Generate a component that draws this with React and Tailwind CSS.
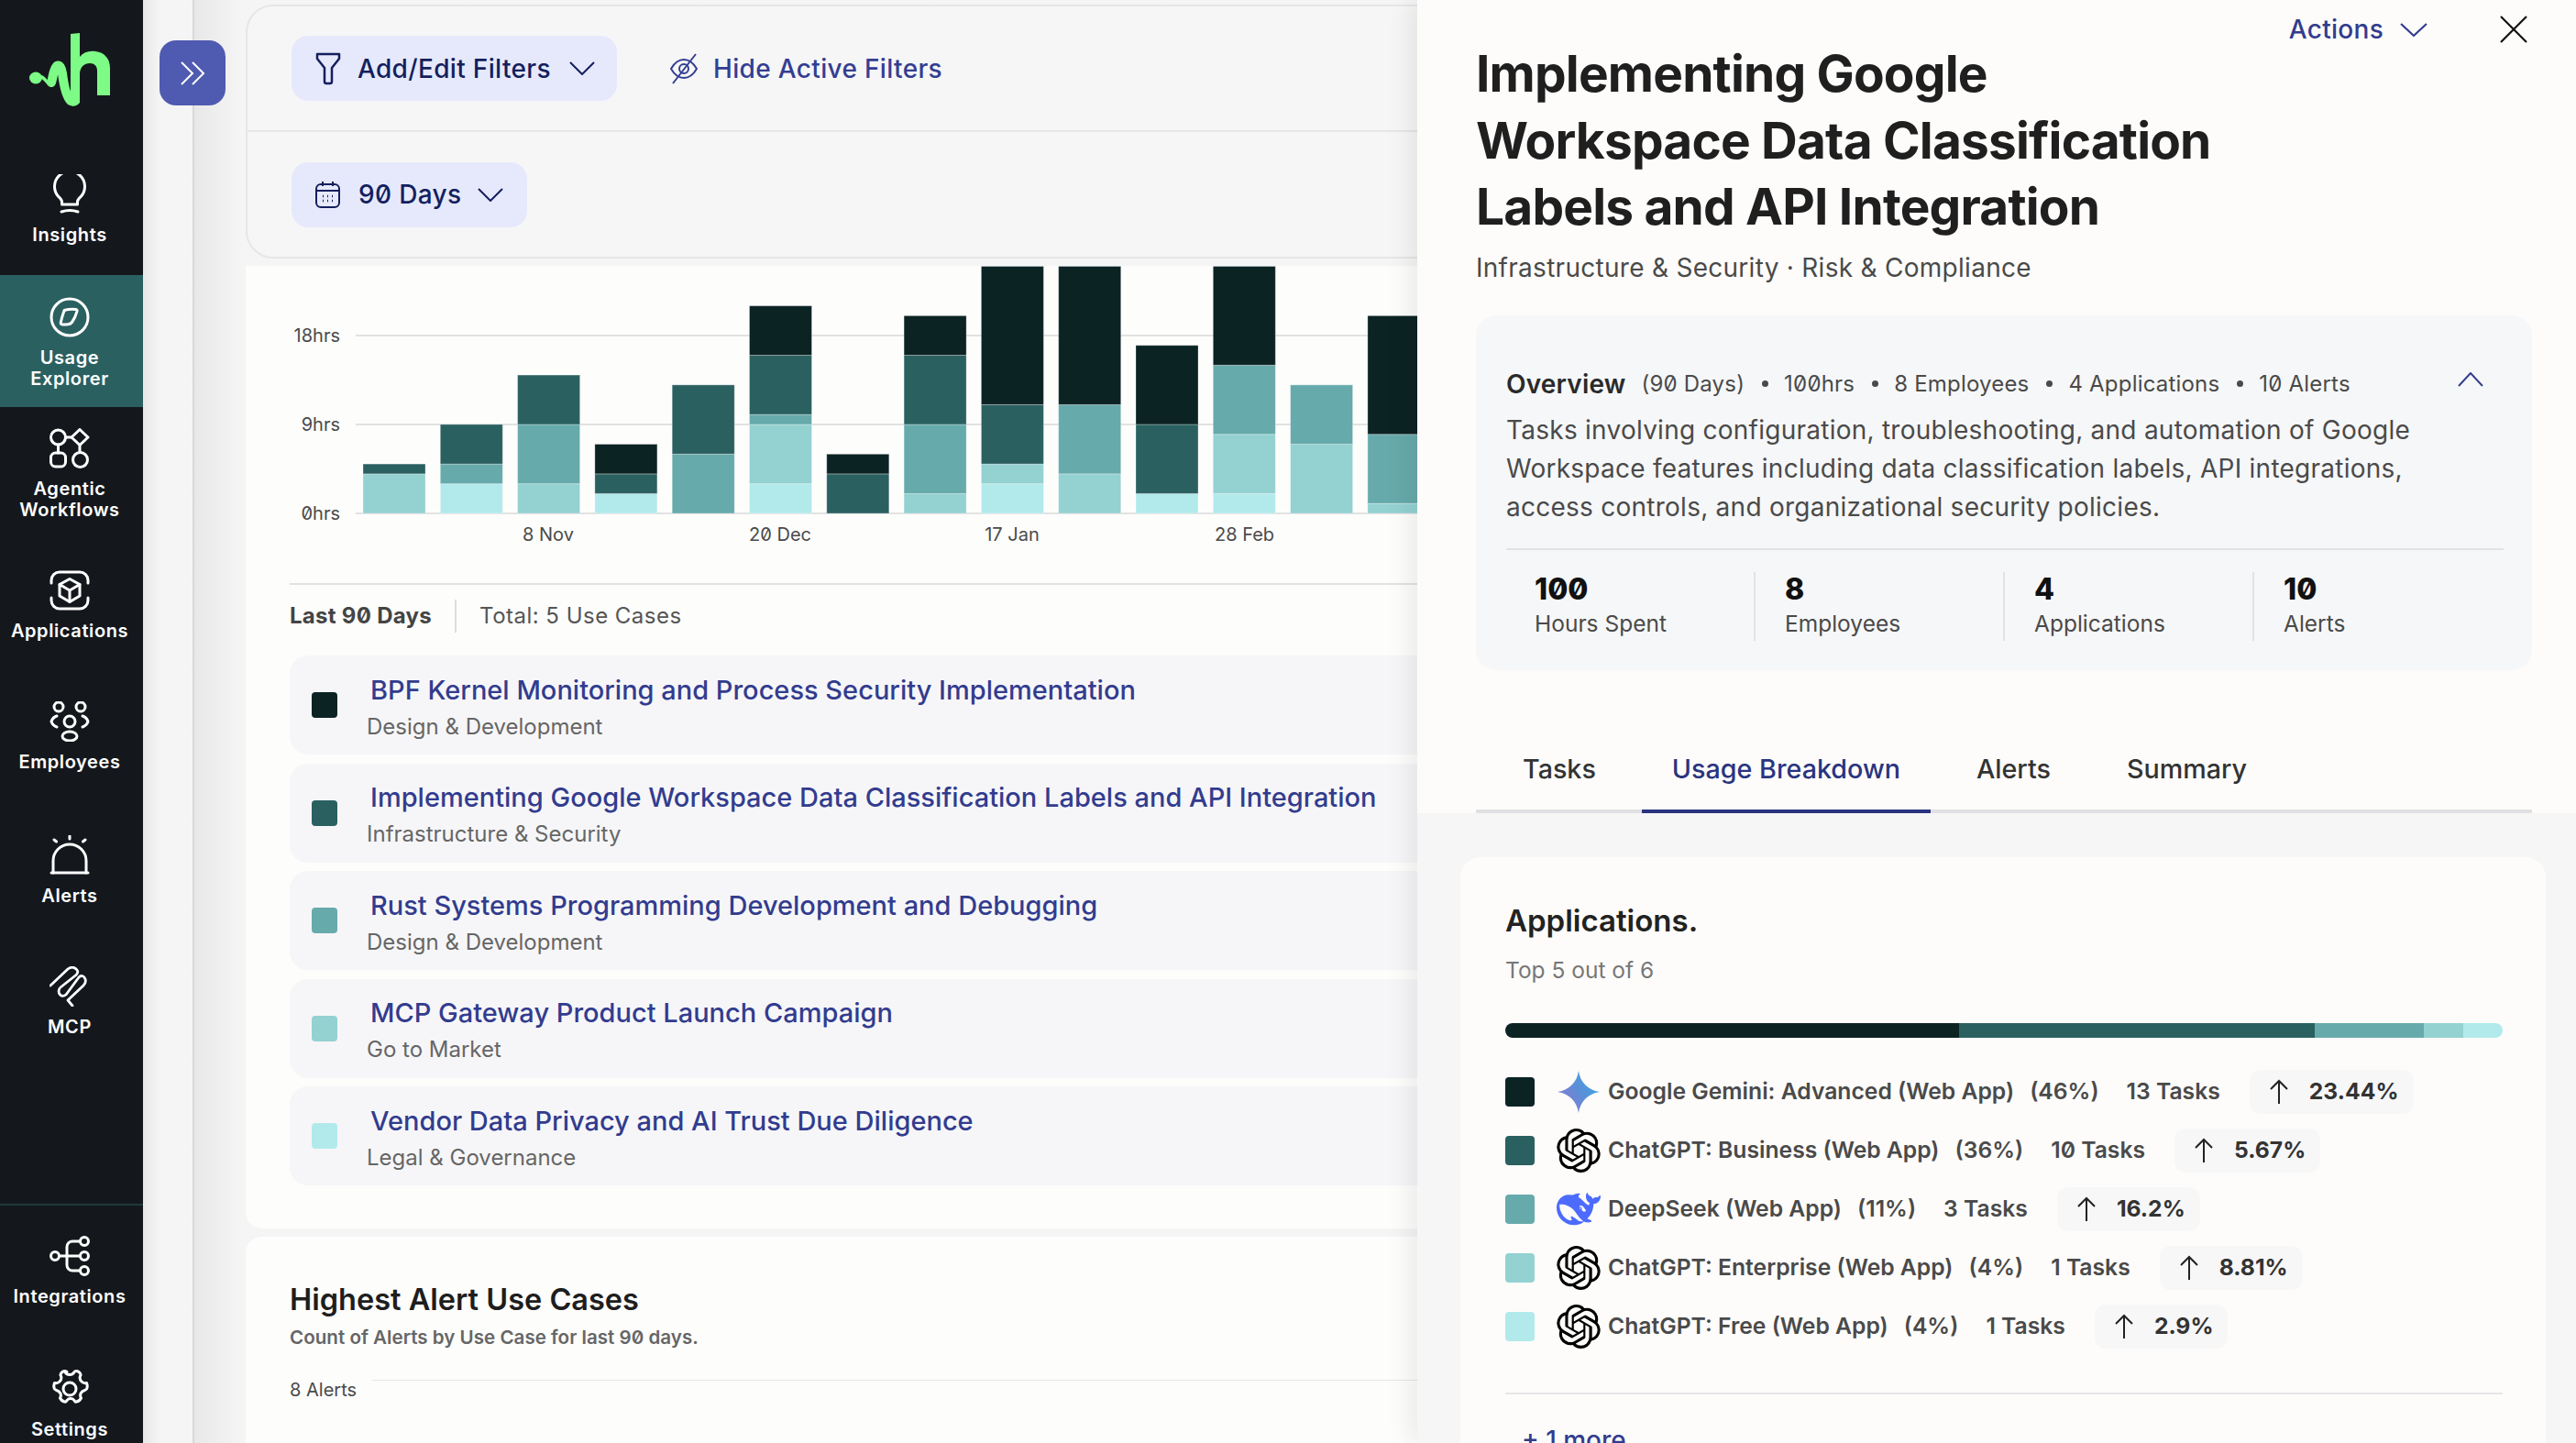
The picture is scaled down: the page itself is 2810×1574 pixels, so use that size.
import { SiOpenai } from 'react-icons/si';

const C = ['#0c2324', '#2b6060', '#67aaab', '#94d1d1', '#b2eaeb'];

// each bar: [colour index, hours] stacked from the bottom
const BARS = [
  [[3, 4], [1, 1]],
  [[4, 3], [2, 2], [1, 4]],
  [[3, 3], [2, 6], [1, 5]],
  [[4, 2], [1, 2], [0, 3]],
  [[2, 6], [1, 7]],
  [[4, 3], [3, 6], [2, 1], [1, 6], [0, 5]],
  [[1, 4], [0, 2]],
  [[3, 2], [2, 7], [1, 7], [0, 4]],
  [[4, 3], [3, 2], [1, 6], [0, 14]],
  [[3, 4], [2, 7], [0, 14]],
  [[4, 2], [1, 7], [0, 8]],
  [[4, 2], [3, 6], [2, 7], [0, 10]],
  [[3, 7], [2, 6]],
  [[3, 1], [2, 7], [0, 12]],
];

const USE_CASES = [
  ['BPF Kernel Monitoring and Process Security Implementation', 'Design & Development', 'bg-[#0c2324]'],
  ['Implementing Google Workspace Data Classification Labels and API Integration', 'Infrastructure & Security', 'bg-[#2b6060]'],
  ['Rust Systems Programming Development and Debugging', 'Design & Development', 'bg-[#67aaab]'],
  ['MCP Gateway Product Launch Campaign', 'Go to Market', 'bg-[#94d1d1]'],
  ['Vendor Data Privacy and AI Trust Due Diligence', 'Legal & Governance', 'bg-[#b2eaeb]'],
];

const APPS = [
  ['gemini', 'Google Gemini: Advanced (Web App)', '(46%)', '13 Tasks', '23.44%', 'bg-[#0c2324]'],
  ['openai', 'ChatGPT: Business (Web App)', '(36%)', '10 Tasks', '5.67%', 'bg-[#2b6060]'],
  ['deepseek', 'DeepSeek (Web App)', '(11%)', '3 Tasks', '16.2%', 'bg-[#67aaab]'],
  ['openai', 'ChatGPT: Enterprise (Web App)', '(4%)', '1 Tasks', '8.81%', 'bg-[#94d1d1]'],
  ['openai', 'ChatGPT: Free (Web App)', '(4%)', '1 Tasks', '2.9%', 'bg-[#b2eaeb]'],
];

function Ico({ children, w = 44, h = 44, box = '0 0 44 44', sw = 3 }) {
  return (
    <svg width={w} height={h} viewBox={box} fill="none" stroke="currentColor" strokeWidth={sw} strokeLinecap="round" strokeLinejoin="round">
      {children}
    </svg>
  );
}

const BulbIcon = () => (
  <Ico>
    <path d="M13.500 33v-3c0-2-1.300-3.300-3.500-5.300a16.500 16.500 0 1 1 24 0c-2.200 2-3.500 3.300-3.500 5.300v3H13.500Z" />
    <path d="M13 41c6-2 12-2 18 0" />
  </Ico>
);
const CompassIcon = () => (
  <Ico>
    <circle cx="22" cy="22" r="20" />
    <path d="M16 14.500c4-1 9-1.400 12.600-1 1.400.2 1.800 1 1.400 2.200-1 3.600-3 8.400-5.500 11.800-1 1.300-2.500 2-4 2.200-3 .4-5.600.5-7 .2-1.200-.3-1.500-1-1.200-2.200.7-3.400 1.700-7 3-10.600.3-1.300 1-2.300.7-2.600Z" />
  </Ico>
);
const AgenticIcon = () => (
  <Ico>
    <circle cx="9.500" cy="10" r="8" />
    <path d="M33 1.500 42 10l-9 8.500L24 10Z" />
    <path d="M17.500 10H24" />
    <rect x="1.500" y="27" width="16" height="15" rx="5" />
    <circle cx="33.500" cy="34.500" r="8" />
    <path d="M9.500 18v9M33 18.500v8" />
  </Ico>
);
const AppsIcon = () => (
  <Ico>
    <path d="M2 14V11a9 9 0 0 1 9-9h22a9 9 0 0 1 9 9v3M2 30v3a9 9 0 0 0 9 9h22a9 9 0 0 0 9-9v-3" />
    <path d="M22 9.500 33 15.500v12.500L22 34.500 11 28V15.500Z" />
    <path d="M11 15.500 22 22l11-6.500M22 22v12.500" />
  </Ico>
);
const PeopleIcon = () => (
  <Ico>
    <circle cx="10" cy="6" r="5" />
    <circle cx="34" cy="6" r="5" />
    <circle cx="22" cy="22" r="6" />
    <ellipse cx="22" cy="38" rx="8" ry="5" />
    <path d="M8 16c-3 1-5 3-6 6 1 3 3 5 6 6M36 16c3 1 5 3 6 6-1 3-3 5-6 6" />
  </Ico>
);
const AlertIcon = () => (
  <Ico>
    <path d="M2 41h40" />
    <path d="M4 41V28a18 18 0 0 1 36 0v13" />
    <path d="M22 1v3M5 5l2.500 2M39 5l-2.500 2" />
  </Ico>
);
const McpIcon = () => (
  <Ico sw={2.800}>
    <path d="M1 21 20 3C24 0 28 1 30 4c1.500 2 .5 4-1 5.500L12 23c-2.500 2-2.500 6-.5 8s4.500 1.500 6.500 0L32 12c3-3 6-1 7 2s0 5-2 7L20 37l5 6" />
  </Ico>
);
const IntegrationsIcon = () => (
  <Ico>
    <circle cx="6" cy="22" r="4.500" />
    <circle cx="38" cy="6" r="4.500" />
    <circle cx="38" cy="22" r="4.500" />
    <circle cx="38" cy="38" r="4.500" />
    <path d="M10.500 22h23M33.500 6H25a6 6 0 0 0-6 6v20a6 6 0 0 0 6 6h8.500" />
  </Ico>
);
const GearIcon = () => (
  <Ico>
    <circle cx="22" cy="22" r="7" />
    <path d="M17 3.500c1 2.500 3 3 5 3s4-.5 5-3c1-1.500 3-1.500 5 0 2 1.500 2.500 3 1.500 4.500-1 2.500 0 4.500 1.500 6s3.500 2 5.500 1.500c1 2.500 1 4.500 0 6.500-1 1-1 1-2 1.500-2 .5-3.500 1.500-4.500 3.500-.5 1.500-.5 3.500.5 5-1 2-2.500 3.500-5 4-1 .5-2-.5-2.500-1.500-1-1.500-3-2-4-2s-3 .5-4 2c-.5 1-1.500 2-2.500 1.500-2.500-.5-4-2-5-4 1-1.500 1-3.500.5-5-1-2-2.500-3-4.500-3.500-1-.5-1-.5-2-1.500-1-2-1-4 0-6.500 2 .5 4 0 5.500-1.500s2.500-3.500 1.500-6c-1-1.500-.5-3 1.500-4.500 2-1.500 4-1.500 5 0Z" />
  </Ico>
);

function NavItem({ icon, label, className, active }) {
  return (
    <div className={`flex shrink-0 flex-col items-center pr-[4px] text-white ${active ? 'bg-[#2b6060]' : ''} ${className}`}>
      {icon}
      <div className="mt-[11px] text-center text-[20px] leading-[23px] font-semibold tracking-[0.03em]">
        {label.map((l) => (
          <div key={l}>{l}</div>
        ))}
      </div>
    </div>
  );
}

function Sidebar() {
  return (
    <aside className="z-20 flex h-full w-[156px] shrink-0 flex-col bg-[#14181d]">
      <div className="h-[166px] shrink-0 pt-[36px] pl-[32px]">
        <svg width="88" height="80" viewBox="0 0 88 80" fill="#7dfb86">
          <ellipse cx="7" cy="49" rx="7" ry="6.500" />
          <path d="M8 48c6-2 8 2 11 5 3 4 4 4 6 0" fill="none" stroke="#7dfb86" strokeWidth="3.500" />
          <path d="M24 54c2-6 2-14 6-18 3-2 5 2 6 8 1 8 3 24 9 30" fill="none" stroke="#7dfb86" strokeWidth="10" strokeLinecap="round" />
          <path d="M45 1 55 0v26c4-5 10-7 17-6 10 1 16 8 16 18v30H74V41c0-5-3-8-8-8-6 0-11 4-11 12v31c-3 4-8 5-12 2-2-3 2-6 2-10Z" />
        </svg>
      </div>
      <NavItem icon={<BulbIcon />} label={['Insights']} className="h-[134px] pt-[24px]" />
      <NavItem icon={<CompassIcon />} label={['Usage', 'Explorer']} className="h-[144px] pt-[24px]" active />
      <NavItem icon={<AgenticIcon />} label={['Agentic', 'Workflows']} className="h-[155px] pt-[23px]" />
      <NavItem icon={<AppsIcon />} label={['Applications']} className="h-[143px] pt-[23px]" />
      <NavItem icon={<PeopleIcon />} label={['Employees']} className="h-[146px] pt-[23px]" />
      <NavItem icon={<AlertIcon />} label={['Alerts']} className="h-[143px] pt-[23px]" />
      <NavItem icon={<McpIcon />} label={['MCP']} className="h-[142px] pt-[23px]" />
      <div className="mt-auto border-t-2 border-[#1f3a3a]">
        <NavItem icon={<IntegrationsIcon />} label={['Integrations']} className="h-[155px] pt-[33px]" />
        <NavItem icon={<GearIcon />} label={['Settings']} className="h-[104px] pt-[23px]" />
      </div>
    </aside>
  );
}

const Chevron = ({ up, className = 'text-[#141f5e]', w = 28, h = 15 }) => (
  <svg width={w} height={h} viewBox="0 0 28 15" preserveAspectRatio="none" fill="none" stroke="currentColor" strokeWidth="2" className={className}>
    <path d={up ? 'M1 14 14 1l13 13' : 'M1 1l13 13L27 1'} />
  </svg>
);

function Filters() {
  return (
    <section className="h-[277px] w-[1500px] rounded-[30px] border-2 border-[#e6e6e6] bg-[#f6f6f7]">
      <div className="flex h-[137px] items-center gap-[58px] border-b-2 border-[#e6e6e6] pl-[48px]">
        <button className="flex h-[71px] w-[355px] items-center rounded-[18px] bg-[#e6e9fb] pl-[26px] text-[#141f5e]">
          <svg width="28" height="36" viewBox="0 0 28 36" fill="none" stroke="currentColor" strokeWidth="2.500" strokeLinejoin="round">
            <path d="M2 2h24v5l-8 10v15a2 2 0 0 1-2 2h-4a2 2 0 0 1-2-2V17L2 7Z" />
          </svg>
          <span className="ml-[18px] text-[28px] font-medium tracking-[0.012em]">Add/Edit Filters</span>
          <Chevron className="ml-[20px] text-[#141f5e]" />
        </button>
        <button className="flex items-center text-[#333e91]">
          <svg width="30" height="36" viewBox="0 0 30 36" fill="none" stroke="currentColor" strokeWidth="2">
            <path d="M1 18c4-7 9-10 14-10s10 3 14 10c-4 7-9 10-14 10S5 25 1 18Z" />
            <circle cx="15" cy="18" r="5" />
            <path d="M3 34 28 2" />
          </svg>
          <span className="ml-[17px] text-[28px] font-medium tracking-[0.012em]">Hide Active Filters</span>
        </button>
      </div>
      <div className="flex h-[136px] items-center pl-[48px]">
        <button className="flex h-[71px] w-[257px] items-center rounded-[18px] bg-[#e6e9fb] pl-[26px] text-[#141f5e]">
          <svg width="27" height="30" viewBox="0 0 27 30" fill="none" stroke="currentColor" strokeWidth="2">
            <rect x="1" y="4" width="25" height="25" rx="5" />
            <path d="M1 11h25M8 1v5M19 1v5" />
            <path d="M8 17h1M13 17h1M18 17h1M8 22h1M13 22h1M18 22h1" strokeWidth="2.500" />
          </svg>
          <span className="ml-[20px] text-[28px] font-medium tracking-[0.012em]">90 Days</span>
          <Chevron className="ml-[18px] text-[#141f5e]" />
        </button>
      </div>
    </section>
  );
}

function UsageChart() {
  const axis = [['18hrs', 366], ['9hrs', 463], ['0hrs', 560]];
  const ticks = [['8 Nov', 598], ['20 Dec', 851], ['17 Jan', 1104], ['28 Feb', 1357.5]];
  return (
    <svg width="1400" height="346" viewBox="268 290 1400 346" className="block">
      {axis.map(([t, y]) => (
        <g key={t}>
          <line x1="388" x2="1668" y1={y} y2={y} stroke="#e2e2e2" strokeWidth="2" />
          <text x="371" y={y + 7} textAnchor="end" fontSize="20" fill="#4a4a4a">{t}</text>
        </g>
      ))}
      {BARS.map((segs, i) => {
        let base = 560;
        return segs.map(([c, hrs], j) => {
          const h = hrs * 10.78;
          base -= h;
          return <rect key={j} x={396 + i * 84.3} y={base} width="68" height={h} fill={C[c]} stroke="#fff" strokeOpacity="0.3" strokeWidth="1" />;
        });
      })}
      {ticks.map(([t, x]) => (
        <text key={t} x={x} y={590} textAnchor="middle" fontSize="20" fill="#4a4a4a">{t}</text>
      ))}
    </svg>
  );
}

function UseCaseRow({ title, sub, color }) {
  return (
    <div className="flex h-[108px] items-center rounded-[20px] bg-[#f6f6f8] pl-[24px]">
      <span className={`h-[28px] w-[28px] shrink-0 rounded-[4px] ${color}`} />
      <div className="ml-[32px] pt-[5px]">
        <div className="ml-[4px] text-[29px] leading-[36px] font-medium whitespace-nowrap text-[#323c8e]">{title}</div>
        <div className="mt-[6px] text-[24px] leading-[32px] text-[#666]">{sub}</div>
      </div>
    </div>
  );
}

function AppLogo({ kind }) {
  if (kind === 'openai') return <SiOpenai size={48} color="#000" className="shrink-0" />;
  if (kind === 'deepseek') {
    return (
      <svg width="48" height="48" viewBox="0 0 24 24" fill="#4d6bfe" className="shrink-0">
        <path d="M23.748 4.482c-.254-.124-.364.113-.512.234-.051.039-.094.09-.137.136-.372.397-.806.657-1.373.626-.829-.046-1.537.214-2.163.848-.133-.782-.575-1.248-1.247-1.548-.352-.156-.708-.311-.955-.65-.172-.241-.219-.51-.305-.774-.055-.16-.11-.323-.293-.35-.2-.031-.278.136-.356.276-.313.572-.434 1.202-.422 1.84.027 1.436.633 2.58 1.838 3.393.137.093.172.187.129.323-.082.28-.18.552-.266.833-.055.179-.137.217-.329.14a5.526 5.526 0 01-1.736-1.18c-.857-.828-1.631-1.742-2.597-2.458a11.365 11.365 0 00-.689-.471c-.985-.957.13-1.743.388-1.836.27-.098.093-.432-.779-.428-.872.004-1.67.295-2.687.684a3.055 3.055 0 01-.465.137 9.597 9.597 0 00-2.883-.102c-1.885.21-3.39 1.102-4.497 2.623C.082 8.606-.231 10.684.152 12.85c.403 2.284 1.569 4.175 3.36 5.653 1.858 1.533 3.997 2.284 6.438 2.14 1.482-.085 3.133-.284 4.994-1.86.47.234.962.327 1.78.397.63.059 1.236-.03 1.705-.128.735-.156.684-.837.419-.961-2.155-1.004-1.682-.595-2.113-.926 1.096-1.296 2.746-2.642 3.392-7.003.05-.347.007-.565 0-.845-.004-.17.035-.237.23-.256a4.173 4.173 0 001.545-.475c1.396-.763 1.96-2.015 2.093-3.517.02-.23-.004-.467-.247-.588zM11.581 18c-2.089-1.642-3.102-2.183-3.52-2.16-.392.024-.321.471-.235.763.09.288.207.486.371.739.114.167.192.416-.113.603-.673.416-1.842-.14-1.897-.167-1.361-.802-2.5-1.86-3.301-3.307-.774-1.393-1.224-2.887-1.298-4.482-.02-.386.093-.522.477-.592a4.696 4.696 0 011.529-.039c2.132.312 3.946 1.265 5.468 2.774.868.86 1.525 1.887 2.202 2.891.72 1.066 1.494 2.082 2.48 2.914.348.292.625.514.891.677-.802.09-2.14.11-3.054-.614zm1-6.44a.306.306 0 01.415-.287.302.302 0 01.2.288.306.306 0 01-.31.307.303.303 0 01-.305-.308zm3.11 1.596c-.2.081-.399.151-.59.16a1.245 1.245 0 01-.798-.254c-.274-.23-.47-.358-.552-.758a1.73 1.73 0 01.016-.588c.07-.327-.008-.537-.239-.727-.187-.156-.426-.199-.688-.199a.559.559 0 01-.254-.078c-.11-.054-.2-.19-.114-.358.028-.054.16-.186.192-.21.356-.202.767-.136 1.146.016.352.144.618.408 1.001.782.391.451.462.576.685.914.176.265.336.537.445.848.067.195-.019.354-.25.452z" />
      </svg>
    );
  }
  return (
    <svg width="48" height="48" viewBox="0 0 48 48" className="shrink-0">
      <defs>
        <linearGradient id="gem" x1="0" y1="1" x2="1" y2="0.3">
          <stop offset="0" stopColor="#9b72cb" />
          <stop offset="0.6" stopColor="#5a8fd8" />
          <stop offset="1" stopColor="#3fa9e0" />
        </linearGradient>
      </defs>
      <path d="M24 1c1.500 12 10 21 23 23-13 2-21.500 11-23 23-1.500-12-10-21-23-23C14 22 22.500 13 24 1Z" fill="url(#gem)" />
    </svg>
  );
}

function AppRow({ kind, name, pct, tasks, delta, color }) {
  return (
    <div className="flex h-[64px] items-center text-[24.700px] font-semibold text-[#4a4a4a]">
      <span className={`h-[32px] w-[32px] shrink-0 rounded-[4px] ${color}`} />
      <span className="ml-[24px]"><AppLogo kind={kind} /></span>
      <span className="ml-[8px] whitespace-nowrap">{name}</span>
      <span className="ml-[17px] whitespace-nowrap">{pct}</span>
      <span className="ml-[30px] whitespace-nowrap">{tasks}</span>
      <div className="ml-[32px] flex h-[48px] items-center rounded-[12px] bg-[#f7f7f8] pr-[16px] pl-[20px] text-[#333]">
        <svg width="24" height="28" viewBox="0 0 24 28" fill="none" stroke="#222" strokeWidth="2">
          <path d="M12 27V2M3 11l9-9 9 9" />
        </svg>
        <span className="ml-[21px] font-bold whitespace-nowrap">{delta}</span>
      </div>
    </div>
  );
}

function Drawer() {
  const stats = [['100', 'Hours Spent'], ['8', 'Employees'], ['4', 'Applications'], ['10', 'Alerts']];
  const facts = ['100hrs', '8 Employees', '4 Applications', '10 Alerts'];
  return (
    <div className="absolute top-0 right-0 bottom-0 z-30 flex w-[1264px] flex-col bg-[#fdfcfa] shadow-[-10px_0_24px_rgba(0,0,0,0.07)]">
      <div className="h-[887px] shrink-0 pt-[17px] pl-[64px]">
        <div className="flex h-[30px] items-center justify-end pr-[53px]">
          <span className="text-[28px] font-medium tracking-[0.01em] text-[#323c8e]">Actions</span>
          <Chevron className="ml-[18px] text-[#323c8e]" w={30} h={15} />
          <svg width="30" height="30" viewBox="0 0 30 30" stroke="#111" strokeWidth="2.200" className="ml-[79px]">
            <path d="M1 1l28 28M29 1 1 29" />
          </svg>
        </div>
        <h1 className="mt-[-3px] text-[55px] leading-[72.500px] font-bold tracking-[-0.015em] text-[#1f1f1f]">
          Implementing Google<br />Workspace Data Classification<br />Labels and API Integration
        </h1>
        <p className="mt-[10px] text-[28px] leading-[40px] tracking-[0.01em] text-[#4a4a4a]">Infrastructure &amp; Security · Risk &amp; Compliance</p>

        <div className="mt-[32px] h-[387px] w-[1152px] rounded-[22px] bg-[#f6f7f8] pt-[57px] pr-[31px] pl-[33px]">
          <div className="flex h-[36px] items-center whitespace-nowrap text-[24px] tracking-[0.008em] text-[#4a4a4a]">
            <span className="text-[28px] font-semibold text-[#2a2a2a]">Overview</span>
            <span className="ml-[17px]">(90 Days)</span>
            {facts.map((f) => (
              <span key={f} className="flex items-center">
                <span className="ml-[19px] h-[7px] w-[7px] rounded-full bg-[#4a4a4a]" />
                <span className="ml-[17px]">{f}</span>
              </span>
            ))}
            <Chevron up className="mr-[22px] mb-[10px] ml-auto text-[#323c8e]" w={28} h={16} />
          </div>
          <p className="mt-[11px] w-[1040px] text-[28px] leading-[42px] tracking-[0.009em] text-[#4a4a4a]">
            Tasks involving configuration, troubleshooting, and automation of Google Workspace features including data classification labels, API integrations, access controls, and organizational security policies.
          </p>
          <div className="mt-[24px] h-[2px] bg-[#e2e2e4]" />
          <div className="mt-[24px] grid h-[75px] grid-cols-[270px_272px_272px_1fr]">
            {stats.map(([n, l], i) => (
              <div key={l} className={i === 0 ? 'pl-[31px]' : 'border-l-2 border-[#e2e2e4] pl-[32px]'}>
                <div className="text-[32px] leading-[38px] font-extrabold text-[#111]">{n}</div>
                <div className="text-[24.500px] leading-[36px] text-[#4a4a4a]">{l}</div>
              </div>
            ))}
          </div>
        </div>

        <div className="mt-[64px] flex h-[92px] w-[1152px] gap-[17px] border-b-4 border-[#e1e1e3] pl-[18px] text-[28.700px] font-medium text-[#333]">
          {['Tasks', 'Usage Breakdown', 'Alerts', 'Summary'].map((t) => (
            <div key={t} className={`-mb-[4px] flex h-[92px] items-center border-b-4 px-[33px] ${t === 'Usage Breakdown' ? 'border-[#2a347f] text-[#2a347f]' : 'border-transparent'}`}>
              {t}
            </div>
          ))}
        </div>
      </div>

      <div className="min-h-0 flex-1 overflow-hidden bg-[#f6f6f7] pt-[48px] pl-[47px]">
        <div className="h-[700px] w-[1184px] rounded-[22px] bg-[#fdfcfa] pt-[47px] pr-[47px] pl-[49px]">
          <h2 className="text-[33px] leading-[44px] font-semibold text-[#222]">Applications.</h2>
          <p className="mt-[15px] text-[24.500px] leading-[34px] text-[#777]">Top 5 out of 6</p>
          <div className="mt-[41px] flex h-[16px] overflow-hidden rounded-full">
            <div className="w-[495px] bg-[#0c2324]" />
            <div className="w-[388px] bg-[#2b6060]" />
            <div className="w-[119px] bg-[#67aaab]" />
            <div className="w-[43px] bg-[#94d1d1]" />
            <div className="w-[43px] bg-[#b2eaeb]" />
          </div>
          <div className="mt-[27px]">
            {APPS.map(([kind, name, pct, tasks, delta, color]) => (
              <AppRow key={name} kind={kind} name={name} pct={pct} tasks={tasks} delta={delta} color={color} />
            ))}
          </div>
          <div className="mt-[40px] h-[2px] bg-[#e6e6e8]" />
          <div className="mt-[32px] pl-[18px] text-[28px] leading-[36px] font-medium text-[#323c8e]">+ 1 more</div>
        </div>
      </div>
    </div>
  );
}

export default function App() {
  return (
    <div className="relative flex h-[1574px] w-full overflow-hidden bg-[#f5f5f6] font-['Inter',sans-serif] [font-feature-settings:'zero']">
      <Sidebar />
      <div className="w-[56px] shrink-0 border-r-2 border-[#d9d9d9] bg-gradient-to-r from-[#e8e8e8] to-[#f5f5f5] to-35%" />
      <button className="absolute top-[44px] left-[174px] z-10 flex h-[71px] w-[72px] items-center justify-center rounded-[18px] bg-[#4f5bb0] text-white">
        <svg width="28" height="28" viewBox="0 0 28 28" fill="none" stroke="currentColor" strokeWidth="2">
          <path d="M2 2l12 12L2 26M14 2l12 12-12 12" />
        </svg>
      </button>
      <main className="min-w-0 flex-1 bg-gradient-to-r from-[#e8e8e8] to-[#f5f5f6] to-[2%] pt-[5px] pl-[56px]">
        <Filters />
        <div className="mt-[8px] h-[1050px] w-[1500px] rounded-b-[18px] bg-[#fdfdfc]">
          <UsageChart />
          <div className="ml-[48px] border-t-2 border-[#e2e2e2] pt-[16px] text-[24px]">
            <div className="flex h-[36px] items-center">
              <span className="font-bold tracking-[0.012em] text-[#444]">Last 90 Days</span>
              <span className="mx-[25px] h-[36px] w-[2px] bg-[#ddd]" />
              <span className="tracking-[0.02em] text-[#555]">Total: 5 Use Cases</span>
            </div>
            <div className="mt-[25px] flex flex-col gap-[9.500px]">
              {USE_CASES.map(([t, s, c]) => (
                <UseCaseRow key={t} title={t} sub={s} color={c} />
              ))}
            </div>
          </div>
        </div>
        <div className="mt-[9px] h-[300px] w-[1500px] rounded-t-[18px] bg-[#fdfdfc] pt-[49px] pl-[48px]">
          <h3 className="text-[32.500px] leading-[40px] font-semibold text-[#1e1e1e]">Highest Alert Use Cases</h3>
          <p className="mt-[7px] text-[20.600px] leading-[28px] font-semibold text-[#666]">Count of Alerts by Use Case for last 90 days.</p>
          <div className="relative mt-[29px] text-[20px] leading-[28px] text-[#4a4a4a]">
            8 Alerts
            <span className="absolute top-[3px] right-0 left-[90px] h-px bg-[#e5e5e5]" />
          </div>
        </div>
      </main>
      <Drawer />
    </div>
  );
}
